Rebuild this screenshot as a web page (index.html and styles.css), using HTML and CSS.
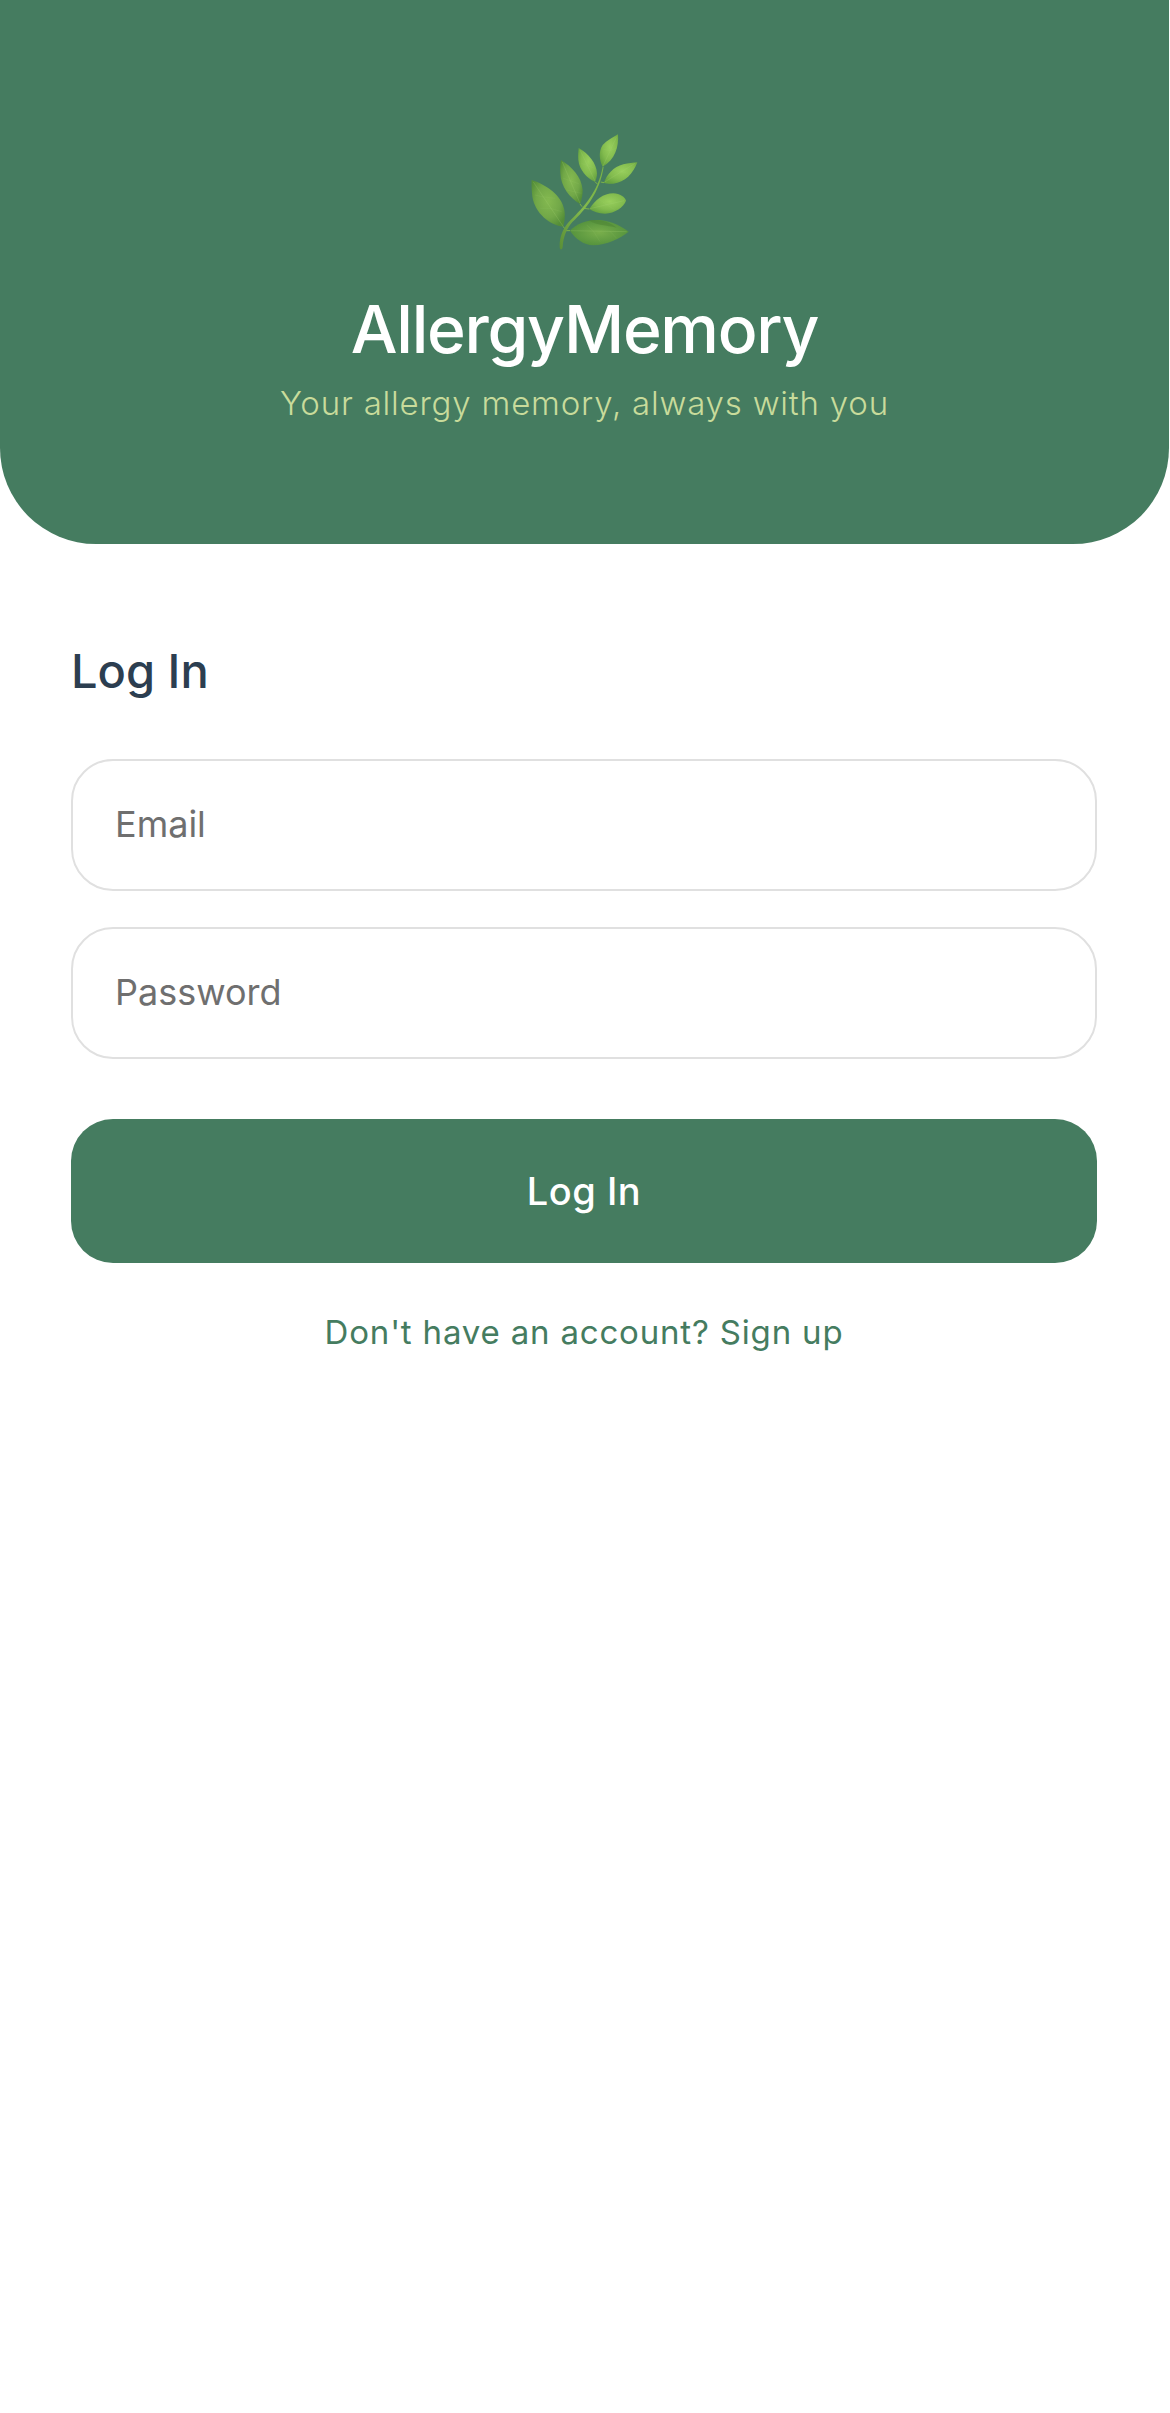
FILE: index.html
```html
<!DOCTYPE html>
<html lang="en">
  <head>
    <meta charset="utf-8" />
    <title>AllergyMemory - Log In</title>
    <link rel="stylesheet" href="styles.css">
  </head>
  <body>
    <header class="hero">
      <svg class="logo" viewBox="0 0 510 450" aria-hidden="true">
        <defs>
          <radialGradient id="leafA" cx="0.5" cy="0.45" r="0.6">
            <stop offset="0" stop-color="#84b950" />
            <stop offset="0.6" stop-color="#72a848" />
            <stop offset="1" stop-color="#548e38" />
          </radialGradient>
          <radialGradient id="leafB" cx="0.55" cy="0.4" r="0.65">
            <stop offset="0" stop-color="#98cf5c" />
            <stop offset="0.6" stop-color="#82bb4e" />
            <stop offset="1" stop-color="#66a340" />
          </radialGradient>
          <radialGradient id="leafC" cx="0.5" cy="0.5" r="0.6">
            <stop offset="0" stop-color="#78ae4b" />
            <stop offset="1" stop-color="#4f8e3b" />
          </radialGradient>
          <linearGradient id="stem" x1="0" y1="1" x2="1" y2="0">
            <stop offset="0" stop-color="#5a8f36" />
            <stop offset="0.5" stop-color="#84ba4c" />
            <stop offset="1" stop-color="#78b244" />
          </linearGradient>
        </defs>
        <path fill="url(#leafA)" d="M95 210C140 225 185 255 193 300C197 320 192 340 190 350C150 345 105 310 97 260C95 240 94 225 95 210Z" />
        <path fill="url(#leafA)" d="M183 150C215 170 245 200 248 240C248 260 243 275 240 282C210 265 182 230 181 190C180 175 181 160 183 150Z" />
        <path fill="url(#leafB)" d="M236 114C265 130 290 160 291 190C291 200 288 210 285 215C260 205 238 180 235 150C234 135 235 125 236 114Z" />
        <path fill="url(#leafB)" d="M354 73C357 110 345 150 308 170C298 150 295 125 308 105C320 92 340 82 354 73Z" />
        <path fill="url(#leafB)" d="M412 157C400 190 375 218 340 221C330 222 318 220 312 218C320 195 340 170 370 163C385 159 400 158 412 157Z" />
        <path fill="url(#leafB)" d="M268 297C285 270 310 250 340 250C360 250 375 262 378 272C372 290 345 310 315 311C295 311 280 305 268 297Z" />
        <path fill="url(#leafC)" d="M210 362C230 340 265 328 300 330C340 335 365 350 386 365C360 385 320 405 280 406C250 405 225 385 210 362Z" />
        <path fill="#4f8636" opacity="0.6" d="M265 331C300 326 335 338 350 353C320 346 290 346 265 331Z" />
        <g class="ribs">
          <path d="M100 216L190 350" />
          <path d="M187 156L240 280" />
          <path d="M240 120L285 213" />
          <path d="M350 80L309 168" />
          <path d="M405 160L314 216" />
          <path d="M372 272L270 296" />
          <path d="M212 362L380 365" />
        </g>
        <g class="veins">
          <path d="M125 260L105 255M150 295L120 295M125 260L165 265M150 295L185 305" />
          <path d="M205 210L190 205M222 245L200 240M205 210L238 222M222 245L245 250" />
          <path d="M258 165L244 160M258 165L284 175" />
          <path d="M330 122L310 118M330 122L348 115" />
          <path d="M360 185L340 180M360 185L385 190" />
          <path d="M320 284L300 270M320 284L345 300" />
          <path d="M280 363L260 345M280 363L300 395M330 364L350 385" />
        </g>
        <g class="stalks">
          <path d="M190 350L197 360" />
          <path d="M240 282L246 290" />
          <path d="M285 215L292 222" />
          <path d="M312 218L302 216" />
          <path d="M268 297L250 295" />
          <path d="M210 362L198 362" />
        </g>
        <path fill="url(#stem)" d="M179 410C178 380 190 352 212 330C250 292 295 245 308 170L311 170C300 245 258 298 217 336C200 356 190 380 188 410C187 421 179 421 179 410Z" />
      </svg>
      <h1 class="app-name">AllergyMemory</h1>
      <p class="tagline">Your allergy memory, always with you</p>
    </header>
    <main class="login">
      <h2 class="login-title">Log In</h2>
      <form class="login-form">
        <input type="email" class="field" placeholder="Email" />
        <input type="password" class="field" placeholder="Password" />
        <button type="button" class="btn">Log In</button>
      </form>
      <a class="signup-link" href="#">Don't have an account? Sign up</a>
    </main>
  </body>
</html>
```

FILE: styles.css
```css
* {
  box-sizing: border-box;
}

body {
  width: 1169px;
  margin: 0;
  background: #ffffff;
  font-family: Inter, "Noto Sans", sans-serif;
}

.hero {
  height: 544px;
  padding-top: 110px;
  background: #457c60;
  border-radius: 0 0 96px 96px;
  text-align: center;
}

.logo {
  display: block;
  width: 170px;
  height: 150px;
  margin: 0 auto;
}

.ribs path {
  fill: none;
  stroke: #a6d473;
  stroke-width: 1.5;
  opacity: 0.45;
}

.veins path {
  fill: none;
  stroke: #a6d473;
  stroke-width: 1.5;
  opacity: 0.22;
}

.stalks path {
  fill: none;
  stroke: #7cb348;
  stroke-width: 3;
}

.app-name {
  margin: 29px 0 0;
  font-size: 66px;
  line-height: 80px;
  font-weight: 500;
  letter-spacing: -1.3px;
  color: #ffffff;
}

.tagline {
  margin: 12px 0 0;
  font-size: 33px;
  line-height: 44px;
  font-weight: 300;
  letter-spacing: 0.8px;
  color: #c8db9b;
}

.login {
  padding: 95px 72px 0 71px;
}

.login-title {
  margin: 0;
  font-size: 47px;
  line-height: 64px;
  font-weight: 500;
  color: #2c3e50;
}

.login-form {
  display: flex;
  flex-direction: column;
  margin-top: 56px;
}

.field {
  height: 132px;
  margin-bottom: 36px;
  padding: 0 42px 2px;
  background: #ffffff;
  border: 2px solid #e0e0e0;
  border-radius: 42px;
  font-family: inherit;
  font-size: 36px;
}

.field::placeholder {
  color: #6f6f6f;
  opacity: 1;
}

.btn {
  height: 144px;
  margin-top: 24px;
  background: #457c60;
  border: none;
  border-radius: 42px;
  font-family: inherit;
  font-size: 38px;
  font-weight: 500;
  letter-spacing: 0.5px;
  color: #ffffff;
}

.signup-link {
  display: block;
  margin-top: 47px;
  font-size: 33px;
  line-height: 44px;
  letter-spacing: 0.82px;
  text-align: center;
  text-decoration: none;
  color: #457c60;
}
```
